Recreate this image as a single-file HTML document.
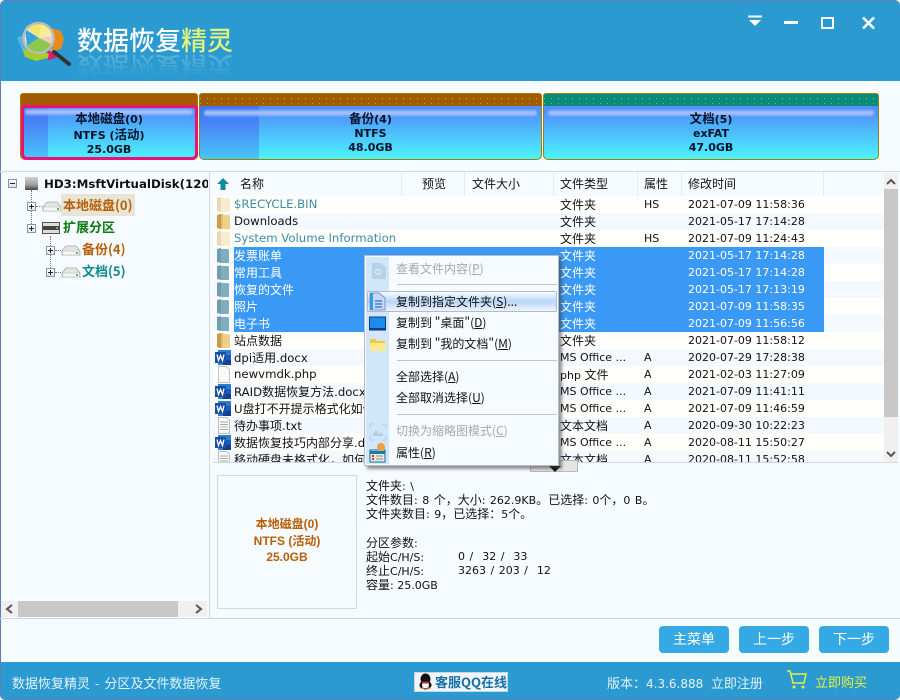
<!DOCTYPE html>
<html lang="zh"><head><meta charset="utf-8"><title>数据恢复精灵</title>
<style>
*{margin:0;padding:0;box-sizing:border-box}
html,body{width:900px;height:700px;overflow:hidden;background:#fff}
body{position:relative;font:11px/17px "DejaVu Sans","Noto Sans CJK SC",sans-serif;color:#111}
i{font:normal 12px/17px "Noto Sans CJK SC","WenQuanYi Zen Hei",sans-serif}
div,span.a,svg.a{position:absolute}
#win{left:0;top:0;width:900px;height:700px;background:#f6fbff;overflow:hidden;border-radius:5px;border:1px solid #5f7fb4;border-width:1px 0 1px 1px}
.bar{position:absolute;background:#2a9ad0}
.p{top:93px;height:67px;border:1px solid #a08000;border-radius:3px 3px 5px 5px;overflow:hidden;background:linear-gradient(#4d86f8,#4f96fa 30%,#4cf4ff)}
.p .t{left:0;top:0;right:0;height:12px}
.p .d{left:0;right:0;height:1px;background:repeating-linear-gradient(90deg,#5ad04a 0 1px,transparent 1px 7px)}
.p .h{left:4px;right:4px;top:16px;height:6px;background:linear-gradient(#7ea8fa,#b4c8fa 50%,#7ea8fa);border-radius:4px;filter:blur(1px)}
.p .u{left:0;top:12px;bottom:0;background:linear-gradient(#3f74ee,#4a8af6 40%,#46c8fb)}
.ptx{left:0;right:0;top:17px;text-align:center;color:#06122a}
.ptx b{display:block;font:bold 11px/14px "DejaVu Sans","Noto Sans CJK SC",sans-serif}
.ptx i{font:bold 12.5px/14px "Noto Sans CJK SC",sans-serif}
.tree{font:bold 13px/18px "Noto Sans CJK SC",sans-serif;white-space:nowrap}
.pm{width:9px;height:9px;border:1px solid #8a96a6;background:linear-gradient(#fff,#dde4ec)}
.pm:before{content:"";position:absolute;left:1px;top:3px;width:5px;height:1px;background:#223}
.pm.plus:after{content:"";position:absolute;left:3px;top:1px;width:1px;height:5px;background:#223}
.dv{border-left:1px dotted #777}.dh{border-top:1px dotted #777}
.hd{top:172px;height:24px;line-height:24px}
.hd i{line-height:24px}
.sp{top:172px;width:1px;height:24px;background:#e8eaed}
#rows{left:213px;top:196px;width:671px;height:266px;overflow:hidden}
.r{left:0;width:671px;height:17px;white-space:nowrap}
.r.o{background:#fffffb}.r.e{background:#f3f9ff}
.r .sel{left:21px;top:0;width:590px;height:17px;background:#3a99f5}
.r span{position:absolute;top:0}
.n{left:21px;font-size:11.7px}.ty{left:347px}.at{left:431px}.tm{left:475px}
.s{color:#fff}.hid{color:#3a8ca6}
.r svg{position:absolute;left:2px;top:0}
#menu{left:364px;top:255px;width:195px;height:211px;background:#f6fbff;border:1px solid #b8bcc2;box-shadow:3px 3px 3px rgba(60,60,60,.55)}
#menu .st{left:1px;top:1px;width:23px;height:207px;background:#cfe6fb}
#menu .sepm{left:32px;width:160px;height:1px;background:#c8c2bc}
#menu .hl{left:2px;top:35px;width:190px;height:21px;border:1px solid #b5bac2;border-radius:2px;background:linear-gradient(#f6fbff,#b9d6f6 50%,#eef5fe)}
#menu .m{left:31px;white-space:nowrap;height:17px}
#menu .off,#menu .off i{color:#a8a8a8}
u{text-decoration:underline}
.btn{top:626px;width:70px;height:27px;background:#35a9e3;border-radius:4px;color:#fff;text-align:center;font:14px/27px "Noto Sans CJK SC",sans-serif}
.info{left:366px;white-space:nowrap;height:14px;line-height:14px;word-spacing:1px}
.info i{line-height:14px}
.bx{font:bold 12px/16px "Liberation Sans","Noto Sans CJK SC",sans-serif;color:#b85f08;text-align:center}
.bx i{font:bold 12px/16px "Noto Sans CJK SC",sans-serif}
</style></head><body>
<svg width="0" height="0" style="position:absolute"><defs>
<symbol id="fo" viewBox="0 0 16 17"><path d="M4 1h4v15H4z" fill="#e0b868"/><path d="M2 2l4-1v15l-4-1z" fill="#c99c4c"/><path d="M8 2h6l1 1v13H7z" fill="#f0cf8a"/></symbol>
<symbol id="fl" viewBox="0 0 16 17"><path d="M2 2l4-1v15l-4-1z" fill="#e6d8b8"/><path d="M6 2h8l1 1v13H6z" fill="#f8ecd0"/></symbol>
<symbol id="fs" viewBox="0 0 16 17"><path d="M2 2l4-1v15l-4-1z" fill="#6e9db4"/><path d="M6 2h7l1 1v13H6z" fill="#82aebc"/></symbol>
<symbol id="wd" viewBox="0 0 17 17"><rect x="3" y="1" width="13" height="15" fill="#2b7cd3"/><rect x="8" y="11" width="8" height="5" fill="#103f91"/><rect x="8" y="6" width="8" height="5" fill="#185abd"/><rect x="0" y="3" width="11" height="11" fill="#1a4ea0"/><path d="M2 5.500l1.500 6 2-5 2 5 1.500-6" fill="none" stroke="#fff" stroke-width="1.300"/></symbol>
<symbol id="pg" viewBox="0 0 17 17"><path d="M3.500 .5h8l3 3v13h-11z" fill="#fafafa" stroke="#c4c4c4"/></symbol>
<symbol id="tx" viewBox="0 0 17 17"><path d="M3.500 .5h8l3 3v13h-11z" fill="#fafafa" stroke="#bcbcbc"/><path d="M5 5h8M5 7.500h8M5 10h8M5 12.500h8" stroke="#aaa"/></symbol>
<symbol id="dk" viewBox="0 0 20 14"><path d="M5 3h10l4 5v4H1V8z" fill="#e4e6e6" stroke="#a4a8a8" stroke-width=".8"/><path d="M1.500 8h17v4h-17z" fill="#f4f6f6" stroke="#b4b8b8" stroke-width=".6"/><rect x="15" y="9" width="2" height="2" fill="#4cc83c"/></symbol>
</defs></svg>
<div id="win">
<div class="bar" style="left:0;top:0;width:900px;height:80px"></div>
<div class="bar" style="left:0;top:661px;width:900px;height:39px"></div>
</div>

<!-- logo -->
<svg class="a" style="left:15px;top:20px" width="60" height="50" viewBox="0 0 60 50">
<path d="M2 18l8-4 7 24-8-4z" fill="#5ab4dc"/>
<path d="M36 8l10 3 3 8-3 10-8 2z" fill="#e88a1c"/>
<path d="M32 30l10 2-1 6-8 2z" fill="#d81c70"/>
<path d="M8 30l12-2 14 6-1 4-12 3-11-4z" fill="#a8cc2c"/>
<circle cx="23.500" cy="18" r="15" fill="#d8eef4"/>
<path d="M10 9l14 9-12 8z" fill="#3aa4d8"/>
<path d="M11 7q6-5 15-3l-2 14z" fill="#f4e468"/>
<path d="M26 4q8 2 11 10l-13 4z" fill="#f8ec8c"/>
<path d="M24 18l13-2-1 8z" fill="#f4c8c0"/>
<path d="M12 26l12-8 12 6-2 5q-12 9-22-3z" fill="#8cc84c"/>
<circle cx="23.500" cy="18" r="15" fill="none" stroke="#b8bcbc" stroke-width="2.500"/>
<path d="M35 29l4 3" stroke="#aaa" stroke-width="3"/>
<path d="M39 32l15 12" stroke="#333" stroke-width="4" stroke-linecap="round"/>
</svg>
<div style="left:77px;top:24px;font:500 26px/32px 'Noto Sans CJK SC',sans-serif;color:#fff;white-space:nowrap;letter-spacing:0">数据恢复<span style="color:#dff47c">精灵</span></div>
<div style="left:77px;top:51px;height:26px;width:160px;overflow:hidden;opacity:.28;-webkit-mask-image:linear-gradient(#000,transparent)"><div style="left:0;top:0;font:500 26px/32px 'Noto Sans CJK SC',sans-serif;color:#fff;white-space:nowrap;transform:scaleY(-1)">数据恢复精灵</div></div>

<!-- window buttons -->
<svg class="a" style="left:745px;top:12px" width="135" height="20" viewBox="0 0 135 20">
<path d="M3 4.500h14" stroke="#fff" stroke-width="2"/><path d="M4 8h12l-6 6z" fill="#fff"/>
<path d="M39 10.500h14" stroke="#fff" stroke-width="3"/>
<rect x="77" y="6" width="11" height="10" fill="none" stroke="#fff" stroke-width="2"/>
<path d="M118 5.500l11 11M129 5.500l-11 11" stroke="#fff" stroke-width="2.600"/>
</svg>

<!-- partitions -->
<div class="p" style="left:20px;width:178px"><div class="t" style="background:#a65a00"></div><div class="u" style="width:27px"></div><div class="h" style="top:15px"></div></div>
<div style="left:21px;top:105px;width:177px;height:55px;border:3px solid #ee1078;border-radius:3px 3px 6px 6px"></div>
<div class="ptx" style="left:20px;width:178px;right:auto;top:111px"><b><i>本地磁盘</i>(0)</b><b>NTFS (<i>活动</i>)</b><b>25.0GB</b></div>

<div class="p" style="left:199px;width:343px"><div class="t" style="background:#a65a00"></div><div class="d" style="top:4px"></div><div class="d" style="top:9px"></div><div class="u" style="width:59px"></div><div class="h"></div></div>
<div class="ptx" style="left:199px;width:343px;right:auto;top:111px"><b><i>备份</i>(4)</b><b>NTFS</b><b>48.0GB</b></div>

<div class="p" style="left:543px;width:336px"><div class="t" style="background:#0a8a78"></div><div class="d" style="top:4px"></div><div class="d" style="top:9px"></div><div class="h"></div></div>
<div class="ptx" style="left:543px;width:336px;right:auto;top:111px"><b><i>文档</i>(5)</b><b>exFAT</b><b>47.0GB</b></div>

<!-- panel lines -->
<div style="left:0;top:171px;width:900px;height:1px;background:#d2d8de"></div>
<div style="left:209px;top:171px;width:1px;height:447px;background:#d2d8de"></div>
<div style="left:0;top:618px;width:900px;height:1px;background:#d0d4da"></div>

<!-- tree -->
<div class="dv" style="left:31px;top:190px;height:40px"></div>
<div class="dv" style="left:50px;top:236px;height:38px"></div>
<div class="dh" style="left:36px;top:206px;width:6px"></div>
<div class="pm" style="left:8px;top:179px"></div>
<svg class="a" style="left:24px;top:176px" width="15" height="15" viewBox="0 0 15 15"><rect x="1" y="1" width="13" height="13" rx="1" fill="url(#gd)"/><defs><linearGradient id="gd" x1="0" y1="0" x2="0" y2="1"><stop offset="0" stop-color="#d0d0d0"/><stop offset=".6" stop-color="#a0a0a0"/><stop offset="1" stop-color="#444"/></linearGradient></defs></svg>
<div class="tree" style="left:44px;top:175px;color:#111;font:bold 11.8px/18px 'DejaVu Sans',sans-serif;width:164px;overflow:hidden">HD3:MsftVirtualDisk(120</div>
<div class="pm plus" style="left:27px;top:202px"></div>
<svg class="a" style="left:42px;top:199px" width="20" height="14"><use href="#dk"/></svg>
<div style="left:61px;top:194px;width:74px;height:22px;background:#e8e4d6"></div>
<div class="tree" style="left:63px;top:196px;color:#b85f08">本地磁盘(0)</div>
<div class="pm plus" style="left:27px;top:224px"></div>
<svg class="a" style="left:42px;top:221px" width="20" height="14" viewBox="0 0 20 14"><rect x=".5" y="1.500" width="17" height="11" fill="#ddd" stroke="#555"/><rect x="1" y="5" width="16" height="4" fill="#444"/><rect x="14" y="6" width="2" height="2" fill="#4cc83c"/></svg>
<div class="tree" style="left:63px;top:218px;color:#0a7a10">扩展分区</div>
<div class="pm plus" style="left:46px;top:246px"></div>
<div class="dh" style="left:55px;top:250px;width:6px"></div>
<svg class="a" style="left:61px;top:243px" width="20" height="14"><use href="#dk"/></svg>
<div class="tree" style="left:82px;top:240px;color:#b85f08">备份(4)</div>
<div class="pm plus" style="left:46px;top:268px"></div>
<div class="dh" style="left:55px;top:272px;width:6px"></div>
<svg class="a" style="left:61px;top:265px" width="20" height="14"><use href="#dk"/></svg>
<div class="tree" style="left:82px;top:262px;color:#0a8a8a">文档(5)</div>

<!-- left h-scroll -->
<div style="left:1px;top:601px;width:206px;height:16px;background:#f0f0f0"></div>
<div style="left:18px;top:601px;width:160px;height:16px;background:#c8c8c8"></div>
<svg class="a" style="left:4px;top:603px" width="204" height="12" viewBox="0 0 204 12"><path d="M8 2L3 6l5 4M192 2l5 4-5 4" fill="none" stroke="#555" stroke-width="2"/></svg>

<!-- list header -->
<svg class="a" style="left:216px;top:177px" width="14" height="14" viewBox="0 0 14 14"><path d="M7 1l6 6H9.500v6h-5V7H1z" fill="#138a9e"/></svg>
<div class="hd" style="left:240px"><i>名称</i></div>
<div class="hd" style="left:422px"><i>预览</i></div>
<div class="hd" style="left:472px"><i>文件大小</i></div>
<div class="hd" style="left:560px"><i>文件类型</i></div>
<div class="hd" style="left:644px"><i>属性</i></div>
<div class="hd" style="left:688px"><i>修改时间</i></div>
<div class="sp" style="left:401px"></div><div class="sp" style="left:464px"></div><div class="sp" style="left:553px"></div><div class="sp" style="left:637px"></div><div class="sp" style="left:681px"></div><div class="sp" style="left:823px"></div>

<!-- rows -->
<div id="rows">
<div class="r o" style="top:0"><svg width="16" height="17"><use href="#fl"/></svg><span class="n hid">$RECYCLE.BIN</span><span class="ty"><i>文件夹</i></span><span class="at">HS</span><span class="tm">2021-07-09 11:58:36</span></div>
<div class="r e" style="top:17px"><svg width="16" height="17"><use href="#fo"/></svg><span class="n">Downloads</span><span class="ty"><i>文件夹</i></span><span class="tm">2021-05-17 17:14:28</span></div>
<div class="r o" style="top:34px"><svg width="16" height="17"><use href="#fl"/></svg><span class="n hid">System Volume Information</span><span class="ty"><i>文件夹</i></span><span class="at">HS</span><span class="tm">2021-07-09 11:24:43</span></div>
<div class="r e" style="top:51px"><span class="sel"></span><svg width="16" height="17"><use href="#fs"/></svg><span class="n s"><i>发票账单</i></span><span class="ty s"><i>文件夹</i></span><span class="tm s">2021-05-17 17:14:28</span></div>
<div class="r o" style="top:68px"><span class="sel"></span><svg width="16" height="17"><use href="#fs"/></svg><span class="n s"><i>常用工具</i></span><span class="ty s"><i>文件夹</i></span><span class="tm s">2021-05-17 17:14:28</span></div>
<div class="r e" style="top:85px"><span class="sel"></span><svg width="16" height="17"><use href="#fs"/></svg><span class="n s"><i>恢复的文件</i></span><span class="ty s"><i>文件夹</i></span><span class="tm s">2021-05-17 17:13:19</span></div>
<div class="r o" style="top:102px"><span class="sel"></span><svg width="16" height="17"><use href="#fs"/></svg><span class="n s"><i>照片</i></span><span class="ty s"><i>文件夹</i></span><span class="tm s">2021-07-09 11:58:35</span></div>
<div class="r e" style="top:119px"><span class="sel"></span><svg width="16" height="17"><use href="#fs"/></svg><span class="n s"><i>电子书</i></span><span class="ty s"><i>文件夹</i></span><span class="tm s">2021-07-09 11:56:56</span></div>
<div class="r o" style="top:136px"><svg width="16" height="17"><use href="#fo"/></svg><span class="n"><i>站点数据</i></span><span class="ty"><i>文件夹</i></span><span class="tm">2021-07-09 11:58:12</span></div>
<div class="r e" style="top:153px"><svg width="17" height="17"><use href="#wd"/></svg><span class="n">dpi<i>适用</i>.docx</span><span class="ty">MS Office ...</span><span class="at">A</span><span class="tm">2020-07-29 17:28:38</span></div>
<div class="r o" style="top:170px"><svg width="17" height="17"><use href="#pg"/></svg><span class="n">newvmdk.php</span><span class="ty">php <i>文件</i></span><span class="at">A</span><span class="tm">2021-02-03 11:27:09</span></div>
<div class="r e" style="top:187px"><svg width="17" height="17"><use href="#wd"/></svg><span class="n">RAID<i>数据恢复方法</i>.docx</span><span class="ty">MS Office ...</span><span class="at">A</span><span class="tm">2021-07-09 11:41:11</span></div>
<div class="r o" style="top:204px"><svg width="17" height="17"><use href="#wd"/></svg><span class="n">U<i>盘打不开提示格式化如何</i></span><span class="ty">MS Office ...</span><span class="at">A</span><span class="tm">2021-07-09 11:46:59</span></div>
<div class="r e" style="top:221px"><svg width="17" height="17"><use href="#tx"/></svg><span class="n"><i>待办事项</i>.txt</span><span class="ty"><i>文本文档</i></span><span class="at">A</span><span class="tm">2020-09-30 10:22:23</span></div>
<div class="r o" style="top:238px"><svg width="17" height="17"><use href="#wd"/></svg><span class="n"><i>数据恢复技巧内部分享</i>.docx</span><span class="ty">MS Office ...</span><span class="at">A</span><span class="tm">2020-08-11 15:50:27</span></div>
<div class="r e" style="top:255px"><svg width="17" height="17"><use href="#tx"/></svg><span class="n"><i>移动硬盘未格式化，如何恢复</i></span><span class="ty"><i>文本文档</i></span><span class="at">A</span><span class="tm">2020-08-11 15:52:58</span></div>
</div>
<div style="left:213px;top:462px;width:685px;height:1px;background:#d4d8dc"></div>

<!-- v-scroll -->
<div style="left:884px;top:173px;width:14px;height:289px;background:#f0f0f0"></div>
<div style="left:884px;top:189px;width:14px;height:228px;background:#c8c8c8"></div>
<svg class="a" style="left:884px;top:175px" width="14" height="286" viewBox="0 0 14 286"><path d="M3 9l4-4 4 4M3 277l4 4 4-4" fill="none" stroke="#555" stroke-width="2"/></svg>

<!-- little dropdown under menu -->
<div style="left:530px;top:460px;width:48px;height:12px;background:#e4e4e4;border:1px solid #bbb"></div>
<svg class="a" style="left:548px;top:466px" width="14" height="6"><path d="M1 0h12l-6 6z" fill="#111"/></svg>

<!-- context menu -->
<div id="menu">
<div class="st"></div>
<svg class="a" style="left:5px;top:5px" width="18" height="20" viewBox="0 0 18 20"><path d="M2 2h9l5 4v12H2z" fill="#b6d2e6"/><circle cx="8" cy="11" r="2.500" fill="none" stroke="#e6f2fa"/></svg>
<div class="m off" style="top:4px"><i>查看文件内容(<u>P</u>)</i></div>
<div class="sepm" style="top:28px"></div>
<div class="hl"></div>
<svg class="a" style="left:4px;top:36px" width="20" height="19" viewBox="0 0 20 19"><path d="M1 1h9l6 5v12H1z" fill="#c8d8f8" stroke="#8a8ae0"/><path d="M1 1h3v17H1z" fill="#2aa0e8"/><path d="M6 9h7M6 12h7M6 15h7" stroke="#2a70d0" stroke-width="1.200"/></svg>
<div class="m" style="top:37px"><i>复制到指定文件夹(<u>S</u>)...</i></div>
<svg class="a" style="left:4px;top:60px" width="18" height="16" viewBox="0 0 18 16"><rect x=".5" y="1" width="16" height="13" fill="#1a8ef0" stroke="#123a7c"/><path d="M1 13h15" stroke="#1a3a80" stroke-width="2"/></svg>
<div class="m" style="top:58px"><i>复制到 "桌面"(<u>D</u>)</i></div>
<svg class="a" style="left:4px;top:80px" width="18" height="17" viewBox="0 0 18 17"><path d="M1 3h6l1 2h8v10H1z" fill="#f0c840"/><path d="M1 7h16l-1 8H1z" fill="#ffe98a"/></svg>
<div class="m" style="top:79px"><i>复制到 "我的文档"(<u>M</u>)</i></div>
<div class="sepm" style="top:104px"></div>
<div class="m" style="top:112px"><i>全部选择(<u>A</u>)</i></div>
<div class="m" style="top:133px"><i>全部取消选择(<u>U</u>)</i></div>
<div class="sepm" style="top:158px"></div>
<svg class="a" style="left:4px;top:167px" width="18" height="18" viewBox="0 0 18 18"><path d="M1 1h4M13 1h4M1 17h4M13 17h4M1 1v4M17 1v4M1 13v4M17 13v4" stroke="#b4cfe4"/><path d="M3 13l4-6 3 4 2-2 3 4z" fill="#b4cfe4"/></svg>
<div class="m off" style="top:166px"><i>切换为缩略图模式(<u>C</u>)</i></div>
<svg class="a" style="left:4px;top:187px" width="18" height="20" viewBox="0 0 18 20"><rect x="1" y="7" width="15" height="12" fill="#e8efe0" stroke="#1a6a90"/><path d="M1 8h15v3H1z" fill="#1a7ab0"/><path d="M3 13h2M3 16h2" stroke="#d03030" stroke-width="2"/><path d="M7 13h7M7 16h7" stroke="#888"/><circle cx="12" cy="4" r="4" fill="#f0a040"/></svg>
<div class="m" style="top:188px"><i>属性(<u>R</u>)</i></div>
</div>

<!-- lower panel -->
<div style="left:217px;top:475px;width:140px;height:134px;border:1px solid #d5d8dc"></div>
<div class="bx" style="left:217px;top:516px;width:140px"><i>本地磁盘</i>(0)</div>
<div class="bx" style="left:217px;top:533px;width:140px">NTFS (<i>活动</i>)</div>
<div class="bx" style="left:217px;top:549px;width:140px">25.0GB</div>
<div class="info" style="top:479px"><i>文件夹</i>: \</div>
<div class="info" style="top:493px"><i>文件数目</i>: 8 <i>个，大小</i>: 262.9KB<i>。已选择</i>: 0<i>个，</i>0 B<i>。</i></div>
<div class="info" style="top:507px"><i>文件夹数目</i>: 9<i>，已选择：</i>5<i>个。</i></div>
<div class="info" style="top:536px"><i>分区参数</i>:</div>
<div class="info" style="top:550px"><i>起始</i>C/H/S:</div><div class="info" style="top:550px;left:458px;white-space:pre">0 /  32 /  33</div>
<div class="info" style="top:564px"><i>终止</i>C/H/S:</div><div class="info" style="top:564px;left:458px;white-space:pre">3263 / 203 /  12</div>
<div class="info" style="top:578px;word-spacing:0"><i>容量</i>: 25.0GB</div>

<!-- buttons -->
<div class="btn" style="left:659px">主菜单</div>
<div class="btn" style="left:739px">上一步</div>
<div class="btn" style="left:819px">下一步</div>

<!-- footer -->
<div style="left:12px;top:674px;color:#e4f4fc;font:13px/17px 'Noto Sans CJK SC',sans-serif;white-space:nowrap;word-spacing:2px">数据恢复精灵 - 分区及文件数据恢复</div>
<div style="left:414px;top:672px;width:94px;height:20px;background:#f2f6fa;border:1px solid #c8d4de"></div>
<svg class="a" style="left:417px;top:673px" width="17" height="18" viewBox="0 0 17 18"><ellipse cx="8.500" cy="6" rx="5" ry="5.500" fill="#111"/><ellipse cx="8.500" cy="12" rx="6" ry="4.500" fill="#111"/><ellipse cx="8.500" cy="12" rx="3.500" ry="3.500" fill="#fff"/><path d="M5 8.500h7l-1 2H6z" fill="#e02020"/><path d="M3 16h4l-1-2zM10 16h4l-2-2z" fill="#f09020"/></svg>
<div style="left:435px;top:673px;color:#1270a8;font:bold 13px/18px 'Noto Sans CJK SC',sans-serif;white-space:nowrap">客服QQ在线</div>
<div style="left:607px;top:674px;color:#e4f4fc;white-space:nowrap;font-size:12px;line-height:17px"><i style="font-size:13px">版本：</i>4.3.6.888&nbsp;&nbsp;<i style="font-size:13px">立即注册</i></div>
<svg class="a" style="left:786px;top:670px" width="22" height="20" viewBox="0 0 22 20"><path d="M1 1h3l3 12h11l2-9H5" fill="none" stroke="#e8f040" stroke-width="1.500"/><circle cx="8" cy="17" r="1.500" fill="#e8f040"/><circle cx="17" cy="17" r="1.500" fill="#e8f040"/></svg>
<div style="left:815px;top:673px;color:#e8f040;font:13px/18px 'Noto Sans CJK SC',sans-serif;white-space:nowrap">立即购买</div>
</body></html>
